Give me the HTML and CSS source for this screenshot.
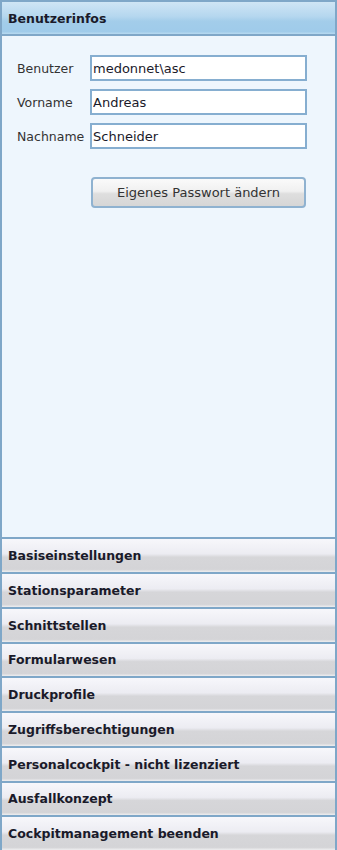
FILE: index.html
```html
<!DOCTYPE html>
<html lang="de">
<head>
<meta charset="UTF-8" />
<meta name="viewport" content="width=device-width, initial-scale=1" />
<title>Cockpitmanagement</title>
<link rel="stylesheet" href="styles.css">
</head>
<body>
  <div class="panel">
    <div class="head active">Benutzerinfos</div>

    <div class="content">
      <div class="form">
        <label for="user">Benutzer</label>
        <input type="text" id="user" value="medonnet\asc" />

        <label for="first">Vorname</label>
        <input type="text" id="first" value="Andreas" />

        <label for="last">Nachname</label>
        <input type="text" id="last" value="Schneider" />
      </div>

      <button class="pwBtn">Eigenes Passwort ändern</button>
    </div>

    <div class="head">Basiseinstellungen</div>
    <div class="head">Stationsparameter</div>
    <div class="head">Schnittstellen</div>
    <div class="head">Formularwesen</div>
    <div class="head">Druckprofile</div>
    <div class="head">Zugriffsberechtigungen</div>
    <div class="head">Personalcockpit - nicht lizenziert</div>
    <div class="head">Ausfallkonzept</div>
    <div class="head">Cockpitmanagement beenden</div>
  </div>
</body>
</html>
```

FILE: styles.css
```css
body {
  margin: 0;
  font-family: 'DejaVu Sans', Verdana, sans-serif;
  font-size: 13px;
  color: #222;
  background: #fff;
}

.panel {
  width: 337px;
  height: 850px;
  box-sizing: border-box;
  border-left: 2px solid #7fa7c8;
  border-right: 2px solid #7fa7c8;
  display: flex;
  flex-direction: column;
}

.head {
  height: 34.75px;
  box-sizing: border-box;
  border-top: 2px solid #7fa7c8;
  padding-left: 6px;
  display: flex;
  align-items: center;
  font-weight: bold;
  font-size: 12.5px;
  color: #1a1a2a;
  background: linear-gradient(#f7f7fb 0%, #ececf2 45%, #d6d6d9 55%, #d4d4d7 92%, #eeeef0 100%);
  flex-shrink: 0;
}

.head.active {
  height: 36px;
  background: linear-gradient(#cfe5f5 0%, #b5d7ef 45%, #a3cdea 60%, #9fcbea 92%, #b8daf0 100%);
  border-bottom: 2px solid #7fa7c8;
}

.content {
  flex: 1;
  background: #eef6fd;
  padding: 19px 0 0 15px;
}

.form {
  display: grid;
  grid-template-columns: 73px 217px;
  row-gap: 8px;
  align-items: center;
}

label {
  font-size: 12.5px;
  color: #333;
}

input {
  height: 26px;
  box-sizing: border-box;
  border: 2px solid #86aed0;
  background: #fff;
  padding: 0 1px;
  font-family: inherit;
  font-size: 13px;
  color: #1a1a2a;
  outline: none;
}

.pwBtn {
  display: block;
  margin: 28px 0 0 74px;
  width: 215px;
  height: 31px;
  border: 2px solid #8fb2d0;
  border-radius: 4px;
  background: linear-gradient(#fafafa 0%, #f0f0f0 45%, #dedede 55%, #d6d6d6 100%);
  font-family: inherit;
  font-size: 13px;
  color: #333;
  cursor: pointer;
}
```
